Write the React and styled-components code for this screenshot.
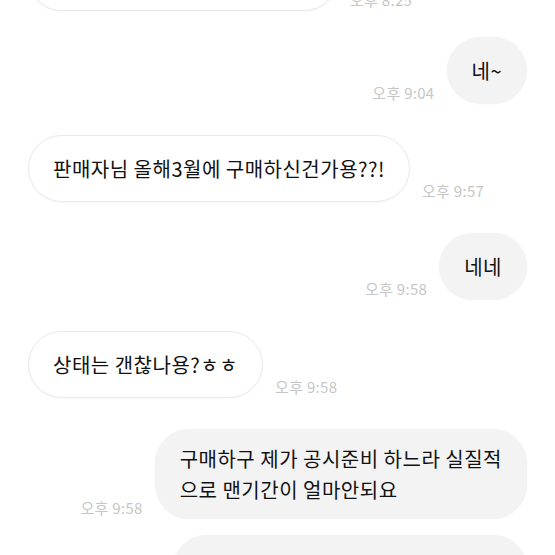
import styled, { createGlobalStyle } from 'styled-components';

const GlobalStyle = createGlobalStyle`
  html, body {
    margin: 0;
    padding: 0;
    background: #fff;
    overflow: hidden;
  }
  body {
    font-family: "Noto Sans CJK KR", "Noto Sans", sans-serif;
  }
`;

const Chat = styled.div`
  display: flex;
  flex-direction: column;
  padding: 0 28px;
  margin-top: -56px;
`;

const Row = styled.div`
  display: flex;
  flex-direction: ${(p) => (p.$mine ? 'row-reverse' : 'row')};
  align-items: flex-end;
  gap: 12px;
  margin-top: ${(p) => p.$gap || 0}px;
`;

const Bubble = styled.div`
  box-sizing: border-box;
  min-height: 67px;
  width: ${(p) => (p.$w ? `${p.$w}px` : 'auto')};
  display: flex;
  align-items: center;
  padding: 13px 24px;
  border-radius: 34px;
  font-size: 20px;
  line-height: 31px;
  color: #111;
  letter-spacing: 0.5px;
  white-space: nowrap;
  background: ${(p) => (p.$mine ? '#f3f3f3' : '#fff')};
  border: 1px solid ${(p) => (p.$mine ? '#f3f3f3' : '#e9e9e9')};
  box-shadow: ${(p) => (p.$mine ? '0 0 3px rgba(0,0,0,0.03)' : '0 1px 2px rgba(0,0,0,0.03)')};
`;

const Time = styled.span`
  font-size: 15px;
  line-height: 18px;
  letter-spacing: 0.3px;
  color: #c6c6c6;
  margin-bottom: 2px;
  white-space: nowrap;
`;

const messages = [
  { mine: false, gap: 0, w: 310, text: '', time: '오후 8:25' },
  { mine: true, gap: 26, text: '네~', time: '오후 9:04' },
  { mine: false, gap: 31, text: '판매자님 올해3월에 구매하신건가용??!', time: '오후 9:57' },
  { mine: true, gap: 31, text: '네네', time: '오후 9:58' },
  { mine: false, gap: 31, text: '상태는 갠찮나용?ㅎㅎ', time: '오후 9:58' },
  {
    mine: true,
    gap: 31,
    text: ['구매하구 제가 공시준비 하느라 실질적', '으로 맨기간이 얼마안되요'],
    time: '오후 9:58',
  },
  { mine: true, gap: 16, w: 354, text: '', time: '' },
];

export default function App() {
  return (
    <>
      <GlobalStyle />
      <Chat>
        {messages.map((m, i) => (
          <Row key={i} $mine={m.mine} $gap={m.gap}>
            <Bubble $mine={m.mine} $w={m.w}>
              {Array.isArray(m.text) ? (
                <span>
                  {m.text[0]}
                  <br />
                  {m.text[1]}
                </span>
              ) : (
                m.text
              )}
            </Bubble>
            {m.time && <Time>{m.time}</Time>}
          </Row>
        ))}
      </Chat>
    </>
  );
}
